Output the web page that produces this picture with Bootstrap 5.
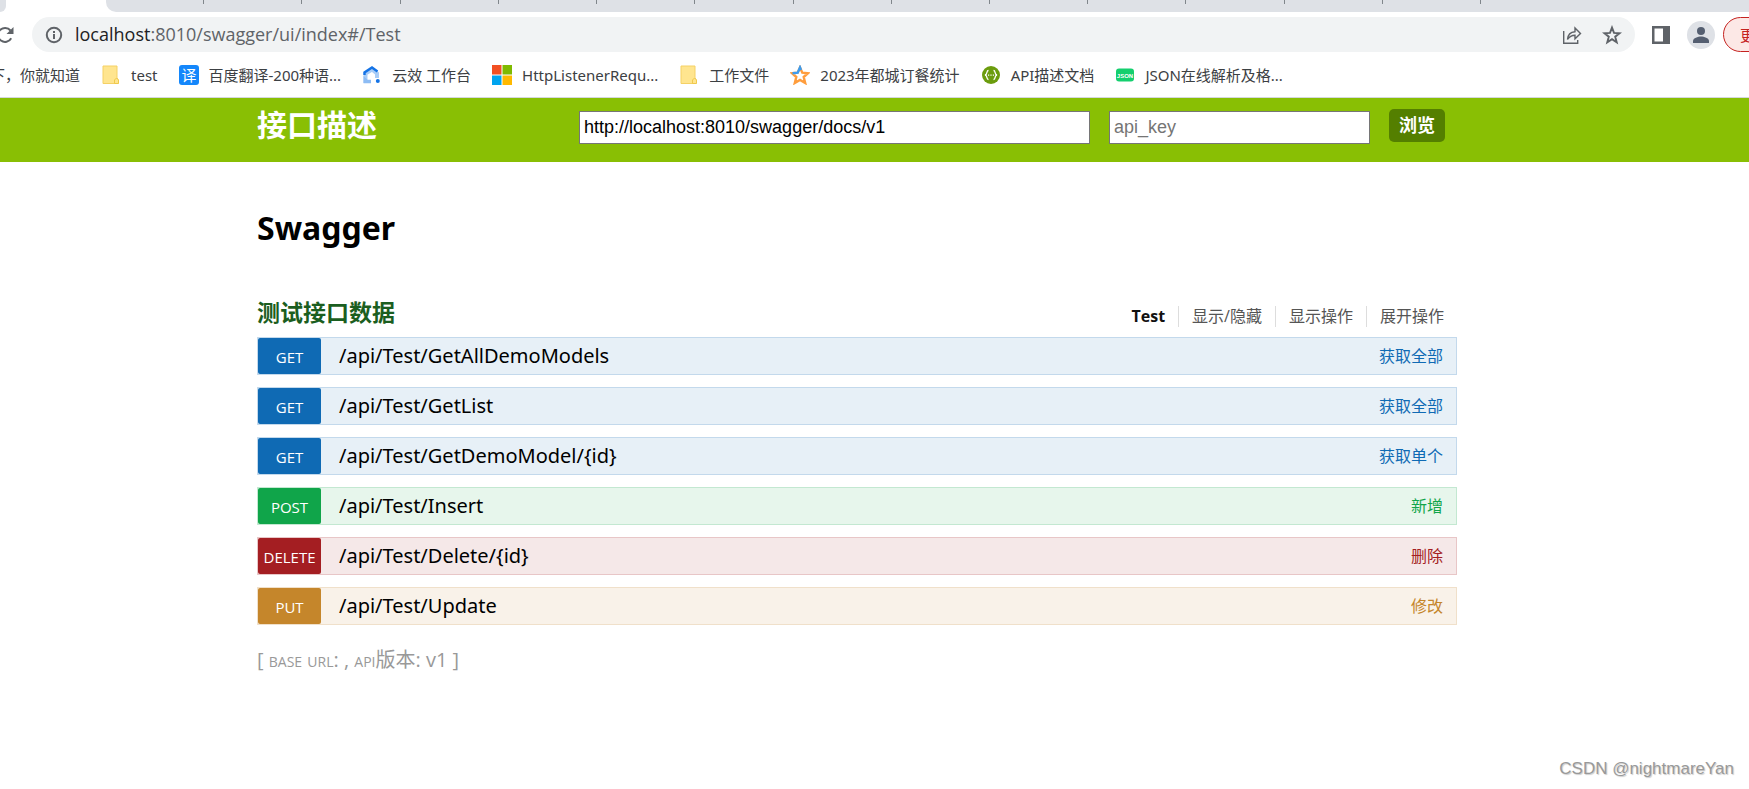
<!DOCTYPE html>
<html lang="zh-CN">
<head>
<meta charset="utf-8">
<meta name="viewport" content="width=device-width, initial-scale=1">
<title>接口描述</title>
<link href="https://cdn.jsdelivr.net/npm/bootstrap@5.3.0/dist/css/bootstrap.min.css" rel="stylesheet">
<style>
  body { font-family: "Open Sans", "Noto Sans CJK SC", sans-serif; color: #000; background: #fff; overflow-x: hidden; }
  a { text-decoration: none; }

  /* browser chrome */
  .chrome { border-bottom: 1px solid #d5d8dc; overflow: hidden; }
  .tab-strip { height: 12px; background: #fff; }
  .strip-left { width: 6px; background: #dee1e6; border-bottom-right-radius: 6px; }
  .tab-active { width: 100px; }
  .tab-bg { background: #dee1e6; border-bottom-left-radius: 10px; padding-right: 268px; }
  .tab-item { height: 4px; border-right: 1px solid #80868b; }
  .tool-row { height: 45px; padding: 5px 0; }
  .omnibox { height: 35px; border-radius: 18px; background: #f1f3f4; margin-left: 18px; padding: 0 13px 0 13px; }
  .omnibox-text { font-size: 18px; line-height: 24px; padding-bottom: 2px; color: #5f6368; }
  .omnibox-text b { font-weight: 400; color: #202124; }
  .plain-btn { border: 0; padding: 0; background: transparent; display: flex; }
  .update-btn { width: 60px; height: 35px; margin-right: -34px; padding-left: 16px; border: 1px solid #c5221f; border-radius: 18px; background: #fce8e6; color: #c5221f; font-size: 15px; line-height: 33px; text-align: left; }
  .bookmarks { height: 40px; padding-bottom: 4px; gap: 21px; margin-left: -10px; white-space: nowrap; font-family: "Noto Sans", "Noto Sans CJK SC", sans-serif; }
  .bookmarks a { color: #3c4043; font-size: 15px; line-height: 20px; gap: 10px; }

  /* page */
  .page-area { padding-right: 35px; }
  .page-wrap { max-width: 1200px; width: 100%; }
  .api-header { background: #89bf04; height: 64px; }
  .api-title { font-size: 30px; line-height: 36px; font-weight: 700; color: #fff; padding-top: 9px; }
  .api-controls { gap: 19px; padding-top: 11px; }
  .api-input { height: 33px; border: 1px solid #767676; border-radius: 0; margin-top: 2px; padding: 0 4px; background: #fff; color: #000; font: 18px "Liberation Sans", Arial, sans-serif; }
  .api-input::placeholder { color: #757575; }
  .url-input { width: 511px; }
  .key-input { width: 261px; }
  .explore-btn { width: 56px; height: 33px; margin-right: 12px; border: 0; border-radius: 5px; padding: 0; background: #547f00; color: #fff; font-size: 18px; line-height: 33px; font-weight: 700; }
  .info-title { font-size: 32px; line-height: 40px; font-weight: 700; margin: 46px 0 49px; font-family: "Noto Sans", "Noto Sans CJK SC", sans-serif; }
  .res-head { margin-bottom: 10px; }
  .res-title { font-size: 23px; line-height: 30px; font-weight: 700; color: #1b5e20; }
  .res-links { padding-right: 13px; }
  .res-links a { color: #555; font-size: 16px; line-height: 21px; }
  .res-links li { line-height: 21px; }
  .res-links li + li { border-left: 1px solid #ddd; margin-left: 13px; padding-left: 13px; }
  .res-links a.res-name { color: #111; font-weight: 700; }
  .op-list { gap: 12px; }
  .op { height: 38px; border: 1px solid; }
  .op-method { width: 63px; height: 36px; border-radius: 2px; color: #fff; font-size: 15px; line-height: 38px; text-align: center; }
  .op-path { color: #000; font-family: "Noto Sans", sans-serif; font-size: 20px; line-height: 36px; margin-left: 18px; }
  .op-note { font-size: 16px; line-height: 36px; margin-right: 13px; }
  .op-get { background: #e7f0f7; border-color: #c3d9ec; } .op-get .op-method { background: #0f6ab4; } .op-get .op-note { color: #0f6ab4; }
  .op-post { background: #e7f6ec; border-color: #c3e8d1; } .op-post .op-method { background: #10a54a; } .op-post .op-note { color: #10a54a; }
  .op-delete { background: #f5e8e8; border-color: #e8c6c7; } .op-delete .op-method { background: #a41e22; } .op-delete .op-note { color: #a41e22; }
  .op-put { background: #f9f2e9; border-color: #f0e0ca; } .op-put .op-method { background: #c5862b; } .op-put .op-note { color: #c5862b; }
  .base-info { font-size: 20px; line-height: 30px; margin-top: 20px; color: #999; }
  .base-info span { font-variant: small-caps; }
  .watermark { font: 17px/20px "Liberation Sans", Arial, sans-serif; color: #999; text-shadow: 1px 1px 1px #ccc; padding: 0 15px 10px; }
</style>
</head>
<body class="d-flex flex-column min-vh-100">

<div class="chrome">
  <div class="tab-strip d-flex">
    <div class="strip-left"></div>
    <div class="tab-active"></div>
    <div class="tab-bg d-flex flex-fill">
      <div class="tab-item flex-fill"></div><div class="tab-item flex-fill"></div><div class="tab-item flex-fill"></div><div class="tab-item flex-fill"></div><div class="tab-item flex-fill"></div><div class="tab-item flex-fill"></div><div class="tab-item flex-fill"></div>
      <div class="tab-item flex-fill"></div><div class="tab-item flex-fill"></div><div class="tab-item flex-fill"></div><div class="tab-item flex-fill"></div><div class="tab-item flex-fill"></div><div class="tab-item flex-fill"></div><div class="tab-item flex-fill"></div>
    </div>
  </div>

  <div class="tool-row d-flex align-items-start">
    <button class="plain-btn align-self-center" type="button" aria-label="重新加载">
      <svg width="14" height="18" viewBox="4 0 14 18"><path d="M15.200 12.200A7 7 0 1 1 14.500 4.500" fill="none" stroke="#5f6368" stroke-width="2"/><path d="M17.500 1v7h-7z" fill="#5f6368"/></svg>
    </button>
    <div class="omnibox d-flex align-items-center flex-fill">
      <svg width="18" height="18" viewBox="0 0 18 18"><circle cx="9" cy="9" r="7.200" fill="none" stroke="#5f6368" stroke-width="2"/><path d="M8 8h2v5H8zM8 5h2v2H8z" fill="#5f6368"/></svg>
      <div class="omnibox-text flex-fill ms-2 ps-1"><b>localhost</b>:8010/swagger/ui/index#/Test</div>
      <button class="plain-btn" type="button" aria-label="分享">
        <svg width="20" height="20" viewBox="0 0 20 20" fill="none" stroke="#5f6368" stroke-width="1.400"><path d="M1.700 6v12.300h14V15"/><path d="M5.500 14.500c.4-5 3-7.600 7.500-7.800V3l5.500 5.600-5.500 5.200v-3.500c-3.400 0-5.600 1.200-7.500 4.200z"/></svg>
      </button>
      <button class="plain-btn ms-3 ps-1" type="button" aria-label="收藏">
        <svg width="20" height="20" viewBox="0 0 20 20"><path d="M10 2.600l2 5.300 5.500.3-4.300 3.500 1.500 5.500L10 14.100l-4.700 3.100 1.500-5.500L2.500 8.200l5.500-.3z" fill="none" stroke="#5f6368" stroke-width="1.900"/></svg>
      </button>
    </div>
    <button class="plain-btn align-self-center ms-3" type="button" aria-label="侧边栏">
      <svg width="20" height="20" viewBox="0 0 20 20"><path fill-rule="evenodd" d="M1 1h18v18H1zM3.500 3.500v13H12v-13z" fill="#5f6368"/></svg>
    </button>
    <button class="plain-btn align-self-center ms-3" type="button" aria-label="用户">
      <svg width="28" height="28" viewBox="0 0 28 28"><circle cx="14" cy="14" r="14" fill="#dee1e6"/><circle cx="14" cy="10" r="4" fill="#545e70"/><path d="M6 22v-2c0-3 5-4.500 8-4.500s8 1.500 8 4.500v2z" fill="#545e70"/></svg>
    </button>
    <button class="update-btn ms-2" type="button">更新</button>
  </div>

  <nav class="bookmarks d-flex align-items-center" aria-label="书签">
    <a href="#" class="d-flex">下，你就知道</a>
    <a href="#" class="d-flex align-items-center">
      <svg width="20" height="20" viewBox="0 0 20 20"><path d="M2 1h14v12l1 1v4.500H2z" fill="#ffe58f" stroke="#f5d165"/><path d="M13.500 18.500V15l2-2 2 2v3.500z" fill="#ffe58f" stroke="#efc94c"/></svg>test</a>
    <a href="#" class="d-flex align-items-center">
      <svg width="20" height="20" viewBox="0 0 20 20"><rect width="20" height="20" rx="3" fill="#1487fb"/><text x="10" y="15.500" font-size="15" text-anchor="middle" fill="#fff">译</text></svg>百度翻译-200种语...</a>
    <a href="#" class="d-flex align-items-center">
      <svg width="20" height="20" viewBox="0 0 20 20"><path d="M3.500 18V8.500L10 4.500l5 4V13" fill="none" stroke="#a9cdf7" stroke-width="4"/><path d="M2.500 10V7.500L10 2.500l5.500 4" fill="none" stroke="#1473e6" stroke-width="2.400"/><path d="M1.500 18.200H9v-3.500H5.500L1.500 11z" fill="#8dbcf4"/><circle cx="15.800" cy="16" r="2" fill="#1473e6"/></svg>云效 工作台</a>
    <a href="#" class="d-flex align-items-center">
      <svg width="20" height="20" viewBox="0 0 20 20"><path d="M0 0h9.500v9.500H0z" fill="#f25022"/><path d="M10.500 0H20v9.500h-9.500z" fill="#7fba00"/><path d="M0 10.500h9.500V20H0z" fill="#00a4ef"/><path d="M10.500 10.500H20V20h-9.500z" fill="#ffb900"/></svg>HttpListenerRequ...</a>
    <a href="#" class="d-flex align-items-center">
      <svg width="20" height="20" viewBox="0 0 20 20"><path d="M2 1h14v12l1 1v4.500H2z" fill="#ffe58f" stroke="#f5d165"/><path d="M13.500 18.500V15l2-2 2 2v3.500z" fill="#ffe58f" stroke="#efc94c"/></svg>工作文件</a>
    <a href="#" class="d-flex align-items-center">
      <svg width="20" height="20" viewBox="0 0 20 20" fill="none" stroke-width="2.400"><path d="M10 2.500l2.300 5.200 5.700.5-4.300 3.800 1.500 6L10 15l-5.200 3 1.500-6L2 8.200l5.700-.5z" stroke="#ff9d3c"/><path d="M2.500 8.200l5.200-.5L10 2.500l1 2.500" stroke="#3c9cf0"/></svg>2023年都城订餐统计</a>
    <a href="#" class="d-flex align-items-center">
      <svg width="20" height="20" viewBox="0 0 20 20"><circle cx="10" cy="10" r="9" fill="#6b9c0d"/><path d="M7.500 5.500C5 5.500 7 9.500 4 10c3 .5 1 4.500 3.500 4.500M12.500 5.500c2.500 0 .5 4 3.500 4.500-3 .5-1 4.500-3.500 4.500" fill="none" stroke="#fff" stroke-width="1.300"/><path d="M7 9.500h1.200v1.200H7zM9.400 9.500h1.200v1.200H9.400zM11.800 9.500H13v1.200h-1.200z" fill="#fff"/></svg>API描述文档</a>
    <a href="#" class="d-flex align-items-center">
      <svg width="20" height="20" viewBox="0 0 20 20"><rect x="1" y="3.500" width="18" height="13" rx="3" fill="#14cf6e"/><text x="10" y="12.500" font-size="6" font-weight="700" font-family="Liberation Sans" text-anchor="middle" fill="#fff">JSON</text></svg>JSON在线解析及格...</a>
  </nav>
</div>

<header class="api-header page-area">
  <form class="page-wrap mx-auto d-flex align-items-start">
    <h1 class="api-title mb-0 me-auto">接口描述</h1>
    <div class="api-controls d-flex align-items-start">
      <input class="api-input url-input" type="text" aria-label="文档地址" value="http://localhost:8010/swagger/docs/v1">
      <input class="api-input key-input" type="text" aria-label="api_key" placeholder="api_key">
      <button class="explore-btn" type="button">浏览</button>
    </div>
  </form>
</header>

<main class="page-area">
  <div class="page-wrap mx-auto">
    <h2 class="info-title">Swagger</h2>

    <div class="res-head d-flex justify-content-between align-items-end">
      <h3 class="res-title mb-0">测试接口数据</h3>
      <ul class="res-links list-unstyled d-flex mb-0">
        <li><a class="res-name" href="#">Test</a></li>
        <li><a href="#">显示/隐藏</a></li>
        <li><a href="#">显示操作</a></li>
        <li><a href="#">展开操作</a></li>
      </ul>
    </div>

    <div class="op-list d-grid">
      <div class="op op-get d-flex"><a class="op-method" href="#">GET</a><a class="op-path me-auto" href="#">/api/Test/GetAllDemoModels</a><a class="op-note" href="#">获取全部</a></div>
      <div class="op op-get d-flex"><a class="op-method" href="#">GET</a><a class="op-path me-auto" href="#">/api/Test/GetList</a><a class="op-note" href="#">获取全部</a></div>
      <div class="op op-get d-flex"><a class="op-method" href="#">GET</a><a class="op-path me-auto" href="#">/api/Test/GetDemoModel/{id}</a><a class="op-note" href="#">获取单个</a></div>
      <div class="op op-post d-flex"><a class="op-method" href="#">POST</a><a class="op-path me-auto" href="#">/api/Test/Insert</a><a class="op-note" href="#">新增</a></div>
      <div class="op op-delete d-flex"><a class="op-method" href="#">DELETE</a><a class="op-path me-auto" href="#">/api/Test/Delete/{id}</a><a class="op-note" href="#">删除</a></div>
      <div class="op op-put d-flex"><a class="op-method" href="#">PUT</a><a class="op-path me-auto" href="#">/api/Test/Update</a><a class="op-note" href="#">修改</a></div>
    </div>

    <p class="base-info mb-0">[ <span>base url</span>: , <span>api</span>版本: v1 ]</p>
  </div>
</main>

<footer class="watermark mt-auto text-end">CSDN @nightmareYan</footer>

<script src="https://cdn.jsdelivr.net/npm/bootstrap@5.3.0/dist/js/bootstrap.bundle.min.js"></script>
</body>
</html>
